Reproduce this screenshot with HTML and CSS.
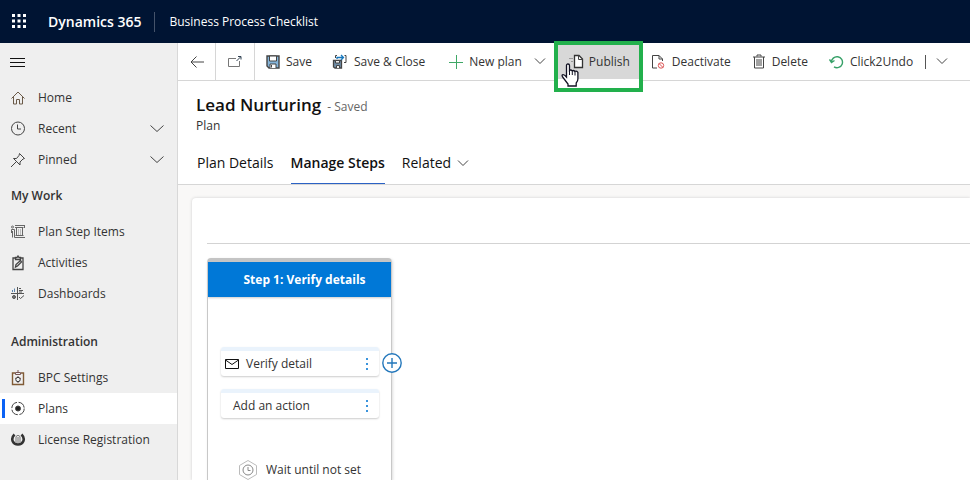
FILE: index.html
```html
<!DOCTYPE html>
<html lang="en">
<head>
<meta charset="utf-8">
<title>Business Process Checklist - Dynamics 365</title>
<link rel="stylesheet" href="styles.css">
</head>
<body>
<header class="topbar">
  <button class="waffle" aria-label="App launcher">
    <svg width="16" height="16" viewBox="0 0 16 16"><path d="M1 1h3v3H1zM6.500 1h3v3h-3zM12 1h3v3h-3zM1 6.500h3v3H1zM6.500 6.500h3v3h-3zM12 6.500h3v3h-3zM1 12h3v3H1zM6.500 12h3v3h-3zM12 12h3v3h-3z"/></svg>
  </button>
  <a class="brand" href="#">Dynamics 365</a>
  <a class="app-name" href="#">Business Process Checklist</a>
</header>
<div class="shell">
  <nav class="sidebar">
    <button class="menu" aria-label="Collapse menu">
      <svg width="16" height="12" viewBox="0 0 16 12" stroke="#111"><path d="M0 1.500h15M0 5.500h15M0 9.500h15"/></svg>
    </button>
    <ul class="nav">
      <li><a href="#"><svg class="ico" viewBox="0 0 16 16"><path d="M1.500 8.500 8 2l6.500 6.500M3.500 7v7h3V9.500h3V14h3V7" stroke="#6b5a48"/></svg>Home</a></li>
      <li><button><svg class="ico" viewBox="0 0 16 16"><circle cx="8" cy="7.500" r="6.500"/><path d="M7.500 3.500V8H11"/></svg>Recent<svg class="chev" viewBox="0 0 14 8"><path d="m.5.500 6.500 6 6.500-6"/></svg></button></li>
      <li><button><svg class="ico" viewBox="0 0 16 16"><path d="m9.500 1.500 5 5-1.500.5-3 3v3L3.500 6.500h3l2.500-3zM6.500 9.500 1 15"/></svg>Pinned<svg class="chev" viewBox="0 0 14 8"><path d="m.5.500 6.500 6 6.500-6"/></svg></button></li>
    </ul>
    <h2>My Work</h2>
    <ul class="nav">
      <li><a href="#"><svg class="ico" viewBox="0 0 16 16" stroke="#666"><circle cx="2.500" cy="3" r="1"/><path d="M1.500 9V5.500h3V9M2.500 7v6.500M4.500 9v4.500M5 1.500h9M5 3.500h8.500M6.500 3.500v8M12.500 3.500v8M5.500 11.500h8M4.500 13.500H15M14.500 1v3"/><path d="M8.500 5v6M10.500 5v6" stroke="#bbb"/></svg>Plan Step Items</a></li>
      <li><a href="#"><svg class="ico" viewBox="0 0 16 16" stroke-width="1.300"><path d="M5 3H3v11.500h10V3h-2M5.500 4.500V2.500h1.500L8 1l1 1.500h1.500v2zM5.500 12l.5-2.500 4.500-4 1 1.500-4 4z"/></svg>Activities</a></li>
      <li><a href="#"><svg class="ico" viewBox="0 0 16 16" stroke="#555"><path d="M1 7.500h13M7.500 1v13M9 2.500h2M9 4.500h4M9 6h3M9 11l1.500 1.500L14 9.500"/><path d="M2.500 6V4M4.500 6V2.500" stroke="#5b84ad"/><circle cx="4" cy="11" r="1.500" fill="#777"/></svg>Dashboards</a></li>
    </ul>
    <h2 class="admin">Administration</h2>
    <ul class="nav">
      <li><a href="#"><svg class="ico" viewBox="0 0 16 16" stroke="#755"><path d="M5 3H2.500v11.500h11V3H11" stroke="#805b36" stroke-width="1.400"/><path d="M5.500 4.500v-2h5v2zM7 1h2"/><circle cx="8" cy="9.500" r="2.200" stroke="#333"/><path d="M8 6v1M8 12v1M5 8l1 .7M11 8l-1 .7"/></svg>BPC Settings</a></li>
      <li><a class="selected" href="#" aria-current="page"><svg class="ico" viewBox="0 0 16 16"><circle cx="8" cy="7.500" r="6.200" stroke-dasharray="8 1.700"/><circle cx="8" cy="7.500" r="2.500" fill="#222"/></svg>Plans</a></li>
      <li><a href="#"><svg class="ico" viewBox="0 0 16 16"><path d="M4.500 2.500C0 7 3 12.500 8 12.500S16 7 11.500 2.500" stroke="#333" stroke-width="2.600"/><path d="M6 11V4.500Q8 2 10 4.500V11M8 5v6" stroke="#777"/></svg>License Registration</a></li>
    </ul>
  </nav>
  <main class="main">
    <div class="commands">
      <button class="square" aria-label="Back"><svg width="14" height="12" viewBox="0 0 14 12"><path d="M6.500.5 1 6l5.500 5.500M1 6h13"/></svg></button>
      <button class="square" aria-label="Open in new window"><svg width="16" height="12" viewBox="0 0 16 12" stroke="#777"><path d="M9 2.500H1.500v8h11V5"/><path d="m9.500 5 4-4M11 .5h3v3" stroke="#345"/></svg></button>
      <button class="cmd save"><svg width="14" height="14" viewBox="0 0 14 14"><path d="M1 1h12v12H3l-2-2z" fill="#85b4d9" stroke-width="1.400"/><path d="M3.500 1h7v5h-7z" fill="#fff"/><path d="M4 13V9h6v4" fill="#fff"/><path d="M5.500 10v2.500"/></svg>Save</button>
      <button class="cmd close"><svg width="16" height="15" viewBox="0 0 16 15"><path d="M1.500 6.500h8v7.500H3l-1.500-1z" fill="#718fa8" stroke-width="1.300"/><path d="M3.500 6.500h4V9h-4zM4.500 14v-2.500h3V14" fill="#eee"/><path d="M3.500 4V1.500H5M12.500 1.500h1.500v7h-2"/><path d="M5 5V3.500h6M9 1l2.500 2.500L9 6" stroke="#1677bd" stroke-width="1.300"/></svg>Save &amp; Close</button>
      <button class="cmd new"><svg width="14" height="14" viewBox="0 0 14 14" stroke="#3fa866"><path d="M0 7.500h14M7.500 0v14"/></svg>New plan</button>
      <button class="more" aria-label="More new options"><svg width="12" height="7" viewBox="0 0 12 7"><path d="m1 .5 5 5 5-5"/></svg></button>
      <div class="highlight">
        <button class="cmd publish"><svg width="16" height="16" viewBox="0 0 16 16"><path d="M1 4.500h4M3 7.500h2" stroke="#999"/><path d="M6.500 1.500H11l3.500 3.500v8.500h-8z" fill="#fff" stroke="#333" stroke-width="1.300"/><path d="M10.500 1.500V5.500h4"/></svg>Publish</button>
        <svg class="cursor" viewBox="0 0 18 24"><path d="M5.500 14V2.500Q5.500 1 7 1t1.500 1.500V7.500q1.300-1.200 2.700.3 1.500-.8 2.700.7 1.600-.9 3 .9V16q0 2-1.700 4v3H7v-2L2 14.500Q.5 12.500 1.500 11.700q1.500-.8 4 2.300z" fill="#fff" stroke="#112" stroke-width="1.300"/><path d="M8.500 7.500V12M11.300 8v4M14 9v3.500" stroke="#112"/></svg>
      </div>
      <button class="cmd deactivate"><svg width="15" height="16" viewBox="0 0 15 16"><path d="M6 14H1.500V1.500H8l3.500 3.500v2M8 1.500V5h3.500"/><circle cx="10" cy="11.500" r="2.700" stroke="#d55"/><path d="m8 9.500 4 4" stroke="#d55"/></svg>Deactivate</button>
      <button class="cmd delete"><svg width="12" height="15" viewBox="0 0 12 15"><path d="M0 3h12M4 2.500V1h4v1.500M1.500 3v11h9V3M4 5v7M6 5v7M8 5v7"/></svg>Delete</button>
      <button class="cmd undo"><svg width="15" height="14" viewBox="0 0 15 14" stroke="#38a169" stroke-width="1.400"><path d="M2.500 7.500A5.500 5.500 0 1 1 5 11.800M.5 4.500l2 3 3-2"/></svg>Click2Undo</button>
      <span class="rule"></span>
      <button class="more last" aria-label="More commands"><svg width="12" height="7" viewBox="0 0 12 7"><path d="m1 .5 5 5 5-5"/></svg></button>
    </div>
    <div class="record">
      <div class="title-row"><h1>Lead Nurturing</h1><span class="saved">- Saved</span></div>
      <p class="entity">Plan</p>
      <div class="tabs" role="tablist">
        <button role="tab" aria-selected="false">Plan Details</button>
        <button role="tab" aria-selected="true" class="active">Manage Steps</button>
        <button role="tab" aria-selected="false">Related<svg width="12" height="7" viewBox="0 0 12 7"><path d="m1 .5 5 5 5-5"/></svg></button>
      </div>
    </div>
    <section class="canvas">
      <div class="panel">
        <div class="steps">
          <article class="step">
            <h3>Step 1: Verify details</h3>
            <div class="actions">
              <div class="action"><svg width="14" height="10" viewBox="0 0 14 10" stroke="#111"><path d="M.5.500h13v9H.5zM.5 1 7 5.500 13.500 1"/></svg><span>Verify detail</span><button class="dots" aria-label="Action options"><svg width="2" height="12" viewBox="0 0 2 12"><path d="M0 0h2v2H0zM0 5h2v2H0zM0 10h2v2H0z"/></svg></button></div>
              <div class="action add"><span>Add an action</span><button class="dots" aria-label="Action options"><svg width="2" height="12" viewBox="0 0 2 12"><path d="M0 0h2v2H0zM0 5h2v2H0zM0 10h2v2H0z"/></svg></button></div>
            </div>
            <div class="wait"><svg width="20" height="20" viewBox="0 0 20 20" stroke="#888"><path d="m10 .5 8.500 5v9l-8.500 5-8.500-5v-9z" stroke="#bbb"/><circle cx="10" cy="10" r="5"/><path d="M10 7v3.500h2.500"/></svg>Wait until not set</div>
            <button class="add-step" aria-label="Add step"><svg width="20" height="20" viewBox="0 0 20 20" stroke="#2377bb"><circle cx="10" cy="10" r="9.200" fill="#fff" stroke-width="1.400"/><path d="M10 5v10M5 10h10" stroke-width="1.400"/></svg></button>
          </article>
        </div>
      </div>
    </section>
  </main>
</div>
</body>
</html>
```
FILE: styles.css
```css
* { box-sizing: border-box; }
body {
  margin: 0;
  height: 100vh;
  display: flex;
  flex-direction: column;
  overflow: hidden;
  font: 12px/20px "Open Sans", "Noto Sans", sans-serif;
  color: #333;
  background: #fff;
}
button { font: inherit; color: inherit; background: none; border: 0; padding: 0; text-align: left; }
a { color: inherit; text-decoration: none; }
h1, h2, h3, p, ul { margin: 0; padding: 0; }
ul { list-style: none; }
svg { fill: none; flex: none; display: block; }
svg:not([stroke]) { stroke: #444; }

.topbar {
  flex: none;
  height: 43px;
  display: flex;
  align-items: center;
  background: #001433;
  color: #fff;
}
.waffle { padding: 0 21px 2px 11px; }
.waffle svg:not([stroke]) { stroke: none; fill: #fff; }
.brand { font-size: 14px; font-weight: 600; padding-right: 13px; }
.app-name { padding-left: 14px; border-left: 1px solid #45536a; }

.shell { flex: 1; display: flex; min-height: 0; }
.sidebar { flex: none; width: 178px; background: #efefef; border-right: 1px solid #d8d8d8; }
.menu { display: flex; align-items: center; height: 39px; padding-left: 10px; }
.nav a, .nav button { display: flex; align-items: center; width: 100%; height: 31px; padding: 0 13px 0 10px; }
.ico { width: 16px; height: 16px; margin-right: 12px; }
.chev { width: 14px; height: 8px; margin-left: auto; }
.sidebar h2 { font-size: 12px; line-height: 41px; font-weight: 600; padding-left: 11px; }
.sidebar .admin { margin-top: 12px; }
.nav .selected { position: relative; background: #fff; }
.selected::before { content: ""; position: absolute; left: 2px; top: 6px; bottom: 6px; width: 3px; background: #0b62f5; }

.main { flex: 1; min-width: 0; display: flex; flex-direction: column; }
.commands { flex: none; display: flex; align-items: center; height: 38px; border-bottom: 1px solid #d6d6d6; }
.square { width: 38px; height: 37px; display: grid; place-items: center; border-right: 1px solid #d6d6d6; }
.square + .square { width: 39px; }
.cmd { display: flex; align-items: center; gap: 6px; white-space: nowrap; }
.save { margin-left: 11px; }
.close { margin-left: 20px; }
.new { margin-left: 24px; }
.more { margin-left: 12px; }
.highlight { position: relative; align-self: flex-start; flex: none; width: 89px; height: 51px; margin: -2px 0 0 8px; border: 4px solid #22b04c; background: #fff; z-index: 1; }
.publish { width: 100%; height: 34px; padding-left: 10px; gap: 5px; background: #d8d8d8; }
.cursor { position: absolute; left: 3px; top: 18px; width: 18px; height: 24px; }
.deactivate { margin-left: 8px; }
.delete { margin-left: 22px; gap: 7px; }
.undo { margin-left: 21px; }
.rule { height: 14px; margin-left: 12px; border-left: 1px solid #555; }
.last { margin-left: 10px; }

.record { flex: none; padding: 13px 18px 0; border-bottom: 1px solid #d6d6d6; }
.title-row { display: flex; align-items: baseline; gap: 6px; }
h1 { font-size: 17px; line-height: 22px; font-weight: 600; color: #111; }
.saved { color: #666; }
.entity { line-height: 18px; }
.tabs { display: flex; gap: 17px; height: 49px; padding: 8px 1px 0; color: #111; }
.tabs button { display: flex; align-items: center; gap: 6px; font-size: 14px; border-bottom: 1px solid transparent; }
.tabs .active { font-weight: 600; border-color: #2b62c4; }

.canvas { flex: 1; min-height: 0; padding: 13px 0 0 14px; background: #f9f8f7; }
.panel { display: flex; flex-direction: column; height: 100%; padding: 45px 0 0 15px; background: #fff; border-radius: 4px 0 0; box-shadow: 0 0 3px #ccc; }
.steps { flex: 1; display: flex; padding-top: 14px; border-top: 1px solid #d3d3d3; }
.step { position: relative; width: 185px; border: 1px solid #c8c8c8; border-top: 4px solid #c4c4c4; border-bottom: 0; border-radius: 4px 4px 0 0; box-shadow: 1px 1px 3px #ddd; }
.step h3 { padding-left: 10px; font-size: 12px; line-height: 35px; font-weight: 700; color: #fff; background: #0078d7; text-align: center; box-shadow: 0 1px 2px #ccc; }
.actions { display: grid; gap: 13px; padding: 50px 12px 0 13px; }
.action { display: flex; align-items: center; gap: 7px; height: 29px; padding: 0 11px 0 4px; border-top: 4px solid #eaf3fc; border-radius: 3px; box-shadow: 0 1px 2px #ccc; }
.add { padding-left: 12px; }
.dots { margin-left: auto; }
.dots svg:not([stroke]) { stroke: none; fill: #3b94dc; }
.wait { display: flex; align-items: center; gap: 8px; margin: 42px 0 0 30px; }
.add-step { position: absolute; right: -11px; top: 91px; }
```
